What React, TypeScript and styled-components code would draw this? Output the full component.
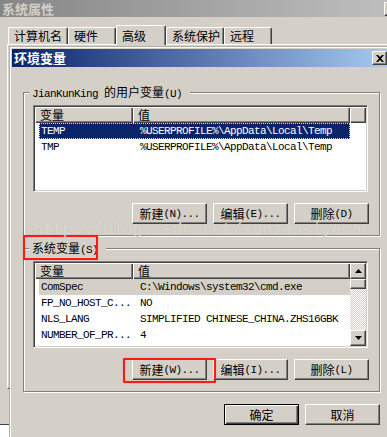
import React from 'react';
import styled, { createGlobalStyle, css } from 'styled-components';

const GlobalStyle = createGlobalStyle`
  html, body {
    margin: 0;
    padding: 0;
  }
  body {
    width: 387px;
    height: 437px;
    overflow: hidden;
    background: #ffffff;
    font-family: 'Liberation Mono', 'Noto Sans CJK SC', monospace;
    font-size: 11px;
    letter-spacing: -0.6px;
    color: #000000;
  }
`;

interface Variable {
  name: string;
  value: string;
}

const userVars: Variable[] = [
  { name: 'TEMP', value: '%USERPROFILE%\\AppData\\Local\\Temp' },
  { name: 'TMP', value: '%USERPROFILE%\\AppData\\Local\\Temp' },
];

const systemVars: Variable[] = [
  { name: 'ComSpec', value: 'C:\\Windows\\system32\\cmd.exe' },
  { name: 'FP_NO_HOST_C...', value: 'NO' },
  { name: 'NLS_LANG', value: 'SIMPLIFIED CHINESE_CHINA.ZHS16GBK' },
  { name: 'NUMBER_OF_PR...', value: '4' },
];

const tabs = [
  { label: '计算机名', width: 60 },
  { label: '硬件', width: 48 },
  { label: '高级', width: 50, active: true },
  { label: '系统保护', width: 58 },
  { label: '远程', width: 48 },
];

// SimSun draws latin at half width, so han runs get their own (bigger) span
const HAN = /([\u3000-\u9fff\uff00-\uffef]+)/;

function Txt({ children }: { children: string }) {
  return (
    <>
      {children
        .split(HAN)
        .filter(Boolean)
        .map((part, i) =>
          HAN.test(part) ? <Han key={i}>{part}</Han> : <span key={i}>{part}</span>
        )}
    </>
  );
}

function CloseIcon() {
  return (
    <svg width='8' height='7' viewBox='0 0 8 7'>
      <path d='M0 0h2l2 2 2-2h2L5 3.5 8 7H6L4 5 2 7H0l3-3.5z' fill='#000' />
    </svg>
  );
}

function Arrow({ up }: { up?: boolean }) {
  return (
    <svg width='7' height='4' viewBox='0 0 7 4'>
      <path d={up ? 'M3.5 0L7 4H0z' : 'M0 0h7L3.5 4z'} fill='#000' />
    </svg>
  );
}

function VarList({
  rows,
  selected,
  focused,
  scroll,
}: {
  rows: Variable[];
  selected: number;
  focused?: boolean;
  scroll?: boolean;
}) {
  return (
    <ListView>
      <ListMain>
        <HeaderRow>
          <HeaderCell style={{ width: 98 }}>
            <Txt>变量</Txt>
          </HeaderCell>
          <HeaderCell style={{ width: 217 }}>
            <Txt>值</Txt>
          </HeaderCell>
          {!scroll && <HeaderCell style={{ width: 16 }} />}
        </HeaderRow>
        {rows.map((row, i) => (
          <Row key={row.name} $selected={i === selected} $focused={focused}>
            <NameCell>{row.name}</NameCell>
            <ValueCell>{row.value}</ValueCell>
          </Row>
        ))}
      </ListMain>
      {scroll && (
        <ScrollBar>
          <ScrollButton>
            <Arrow up />
          </ScrollButton>
          <Thumb />
          <Track />
          <ScrollButton>
            <Arrow />
          </ScrollButton>
        </ScrollBar>
      )}
    </ListView>
  );
}

export default function App() {
  return (
    <Screen>
      <GlobalStyle />
      <SysWindow>
        <SysTitle>
          <TitleText>系统属性</TitleText>
          <CloseButton>
            <CloseIcon />
          </CloseButton>
        </SysTitle>
        <TabStrip>
          {tabs.map((tab) => (
            <Tab key={tab.label} $w={tab.width} $active={tab.active}>
              <Txt>{tab.label}</Txt>
            </Tab>
          ))}
        </TabStrip>
        <TabPanel />
      </SysWindow>

      <EnvDialog>
        <DialogTitle>
          <TitleText>环境变量</TitleText>
          <CloseButton>
            <CloseIcon />
          </CloseButton>
        </DialogTitle>

        <DialogBody>
          <Watermark>http://blog.csdn.net/xunzaosiyecao</Watermark>

          <Group>
            <GroupLabel>
              <Txt>JianKunKing 的用户变量(U)</Txt>
            </GroupLabel>
            <VarList rows={userVars} selected={0} focused />
            <ButtonRow>
              <Button>
                <Txt>新建(N)...</Txt>
              </Button>
              <Button>
                <Txt>编辑(E)...</Txt>
              </Button>
              <Button>
                <Txt>删除(D)</Txt>
              </Button>
            </ButtonRow>
          </Group>

          <Group $spaced>
            <GroupLabel>
              <Txt>系统变量(S)</Txt>
            </GroupLabel>
            <RedMark style={{ left: -1, top: -14, width: 75, height: 25 }} />
            <VarList rows={systemVars} selected={0} scroll />
            <ButtonRow>
              <Marked>
                <Button>
                  <Txt>新建(W)...</Txt>
                </Button>
                <RedMark style={{ left: -9, top: -1, width: 93, height: 25 }} />
              </Marked>
              <Button>
                <Txt>编辑(I)...</Txt>
              </Button>
              <Button>
                <Txt>删除(L)</Txt>
              </Button>
            </ButtonRow>
          </Group>

          <Footer>
            <Button $default>
              <Txt>确定</Txt>
            </Button>
            <Button>
              <Txt>取消</Txt>
            </Button>
          </Footer>
        </DialogBody>
      </EnvDialog>
    </Screen>
  );
}

const raised = css`
  background: #d4d0c8;
  box-sizing: border-box;
  border: 1px solid;
  border-color: #ffffff #404040 #404040 #ffffff;
  box-shadow: inset -1px -1px #808080;
`;

const Han = styled.span`
  font-family: 'Noto Sans CJK SC', sans-serif;
  font-size: 12px;
  letter-spacing: 0;
`;

const Screen = styled.div`
  position: relative;
  width: 387px;
  height: 437px;
  overflow: hidden;
  background: #ffffff;
`;

const SysWindow = styled.div`
  width: 401px;
  height: 425px;
  box-sizing: border-box;
  background: #d4d0c8;
  border-bottom: 1px solid #404040;
  display: flex;
  flex-direction: column;
`;

const SysTitle = styled.div`
  height: 17px;
  display: flex;
  align-items: center;
  justify-content: space-between;
  padding-left: 2px;
  background: linear-gradient(to right, #868686, #c0c0c0);
  color: #d4d0c8;
`;

const TitleText = styled.span`
  font-family: 'Noto Sans CJK SC', sans-serif;
  font-size: 13px;
  font-weight: 700;
  letter-spacing: 0;
  line-height: 16px;
`;

const CloseButton = styled.div`
  ${raised};
  width: 15px;
  height: 14px;
  margin-right: 2px;
  display: flex;
  align-items: center;
  justify-content: center;
`;

const TabStrip = styled.div`
  height: 27px;
  display: flex;
  align-items: flex-end;
  padding-left: 8px;
`;

const Tab = styled.div<{ $w: number; $active?: boolean }>`
  position: relative;
  z-index: ${(p) => (p.$active ? 1 : 0)};
  width: ${(p) => p.$w}px;
  height: ${(p) => (p.$active ? 20 : 17)}px;
  margin-bottom: ${(p) => (p.$active ? -1 : 0)}px;
  padding: ${(p) => (p.$active ? 3 : 1)}px 0 0 5px;
  box-sizing: border-box;
  background: #d4d0c8;
  border-top: 1px solid #ffffff;
  border-left: 1px solid #ffffff;
  border-right: 1px solid #404040;
  border-radius: 2px 2px 0 0;
  box-shadow: inset -1px 0 #808080;
  line-height: 14px;
  white-space: nowrap;
`;

const TabPanel = styled.div`
  height: 345px;
  margin-left: 7px;
  box-sizing: border-box;
  border-top: 1px solid #ffffff;
  border-left: 1px solid #ffffff;
  border-bottom: 1px solid #404040;
`;

const EnvDialog = styled.div`
  position: absolute;
  left: 9px;
  top: 46px;
  z-index: 2;
  width: 383px;
  height: 420px;
  padding: 2px;
  box-sizing: border-box;
  background: #d4d0c8;
  border: 1px solid;
  border-color: #b4b0a8 #404040 #404040 #b4b0a8;
  box-shadow: inset 1px 1px #ffffff, inset -1px -1px #808080;
`;

const DialogTitle = styled.div`
  height: 18px;
  display: flex;
  align-items: center;
  justify-content: space-between;
  padding-left: 2px;
  background: linear-gradient(to right, #0a246a, #a6caf0);
  color: #ffffff;
`;

const DialogBody = styled.div`
  position: relative;
  padding: 25px 0 0 11px;
  display: flex;
  flex-direction: column;
`;

const Watermark = styled.div`
  position: absolute;
  left: 21px;
  top: 154px;
  z-index: 3;
  pointer-events: none;
  font-family: 'Liberation Mono', monospace;
  font-size: 16.6px;
  line-height: 17px;
  letter-spacing: 0;
  white-space: nowrap;
  color: #dfdcd6;
  text-shadow: 0 0 1px #b8b4ac;
  opacity: 0.85;
`;

const Group = styled.div<{ $spaced?: boolean }>`
  position: relative;
  width: 357px;
  height: 144px;
  margin-top: ${(p) => (p.$spaced ? 12 : 0)}px;
  padding: 12px 10px 0 9px;
  box-sizing: border-box;
  border: 1px solid #808080;
  box-shadow: inset 1px 1px #ffffff, 1px 1px #ffffff;
  display: flex;
  flex-direction: column;
`;

const GroupLabel = styled.div`
  position: absolute;
  left: 5px;
  top: -8px;
  padding: 0 8px 0 3px;
  background: #d4d0c8;
  line-height: 14px;
  white-space: nowrap;
`;

const RedMark = styled.div`
  position: absolute;
  box-sizing: border-box;
  border: 2px solid #ff1818;
  border-radius: 1px;
  box-shadow: 0 0 1px rgba(255, 0, 0, 0.6);
  pointer-events: none;
`;

const Marked = styled.div`
  position: relative;
  display: flex;
`;

const ListView = styled.div`
  width: 335px;
  height: 87px;
  padding: 1px;
  box-sizing: border-box;
  background: #ffffff;
  border: 1px solid;
  border-color: #808080 #ffffff #ffffff #808080;
  box-shadow: inset 1px 1px #404040, inset -1px -1px #d4d0c8;
  display: flex;
  overflow: hidden;
`;

const ListMain = styled.div`
  flex: 1;
  display: flex;
  flex-direction: column;
`;

const HeaderRow = styled.div`
  display: flex;
  height: 16px;
  flex-shrink: 0;
`;

const HeaderCell = styled.div`
  height: 16px;
  box-sizing: border-box;
  padding-left: 5px;
  background: #d4d0c8;
  box-shadow: inset 1px 1px #ffffff, inset -1px -1px #404040, inset -2px -2px #808080;
  line-height: 15px;
`;

const Row = styled.div<{ $selected?: boolean; $focused?: boolean }>`
  display: grid;
  grid-template-columns: 94px 1fr;
  width: 311px;
  height: 16px;
  margin-left: 4px;
  box-sizing: border-box;
  line-height: 16px;
  white-space: nowrap;
  ${(p) =>
    p.$selected &&
    (p.$focused
      ? css`
          background: #0a246a;
          color: #ffffff;
          outline: 1px dotted #e8dc9a;
          outline-offset: -1px;
        `
      : css`
          background: #d4d0c8;
        `)}
`;

const NameCell = styled.span`
  padding-left: 2px;
`;

const ValueCell = styled.span`
  padding-left: 7px;
`;

const ScrollBar = styled.div`
  width: 16px;
  display: flex;
  flex-direction: column;
`;

const ScrollButton = styled.div`
  ${raised};
  width: 16px;
  height: 16px;
  flex-shrink: 0;
  display: flex;
  align-items: center;
  justify-content: center;
`;

const Thumb = styled.div`
  ${raised};
  height: 10px;
  flex-shrink: 0;
`;

const Track = styled.div`
  flex: 1;
  background: repeating-conic-gradient(#ffffff 0 25%, #d4d0c8 0 50%) 0 0 / 2px 2px;
`;

const ButtonRow = styled.div`
  display: flex;
  justify-content: flex-end;
  gap: 6px;
  margin-top: 11px;
`;

const Footer = styled.div`
  width: 357px;
  display: flex;
  justify-content: flex-end;
  gap: 6px;
  margin-top: 12px;
`;

const Button = styled.div<{ $default?: boolean }>`
  ${raised};
  width: 75px;
  height: 21px;
  display: flex;
  align-items: center;
  justify-content: center;
  white-space: nowrap;
  line-height: 14px;
  ${(p) =>
    p.$default &&
    css`
      border-color: #000000;
      box-shadow: inset 1px 1px #ffffff, inset -1px -1px #404040, inset -2px -2px #808080;
    `}
`;
